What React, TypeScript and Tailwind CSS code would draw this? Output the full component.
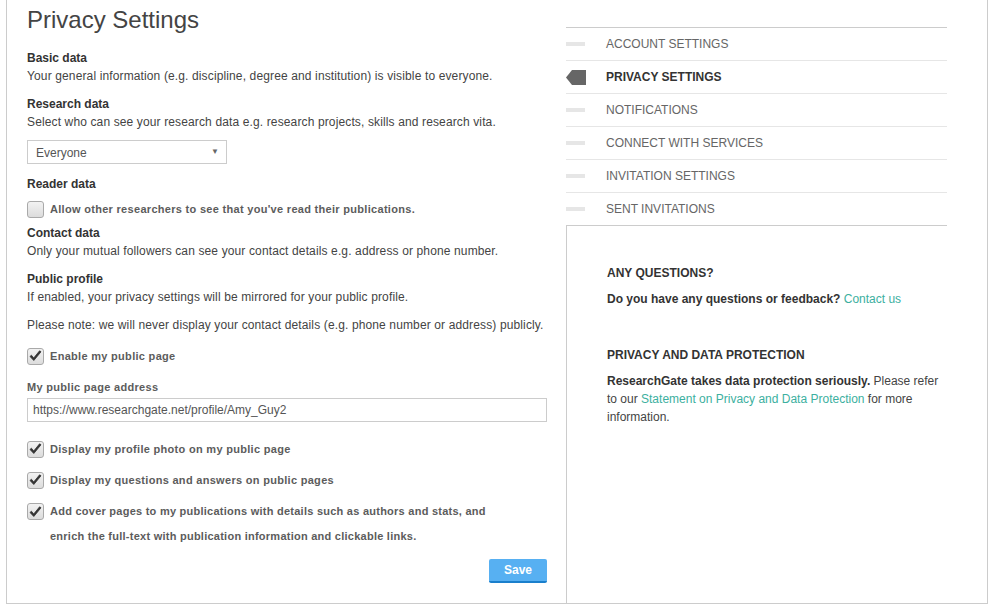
import React from "react";

function Check({ checked }: { checked: boolean }) {
  return (
    <div className="w-[17px] h-[17px] shrink-0 rounded-[3px] border border-[#a9a9a9] bg-gradient-to-b from-[#f2f2f2] to-[#dcdcdc] flex items-center justify-center">
      {checked && (
        <svg width="13" height="12" viewBox="0 0 13 12">
          <path d="M1 6.5 L4.8 10.5 L12 1.8 L10.6 0.8 L4.7 8 L2.4 5.2 Z" fill="#333" stroke="#333" strokeWidth="0.8" strokeLinejoin="round" />
        </svg>
      )}
    </div>
  );
}

function CheckRow({ checked, children, className = "" }: { checked: boolean; children: React.ReactNode; className?: string }) {
  return (
    <div className={"flex items-center gap-[6px] h-[18px] " + className}>
      <Check checked={checked} />
      <span className="text-[11px] font-bold text-[#5c5c5c] tracking-[0.3px]">{children}</span>
    </div>
  );
}

const navItems = [
  "ACCOUNT SETTINGS",
  "PRIVACY SETTINGS",
  "NOTIFICATIONS",
  "CONNECT WITH SERVICES",
  "INVITATION SETTINGS",
  "SENT INVITATIONS",
];

export default function App() {
  return (
    <div className="w-[993px] h-[605px] bg-white" style={{ fontFamily: '"Liberation Sans", Arial, sans-serif' }}>
      <div className="ml-[6px] w-[982px] h-[604px] border-l border-r border-b border-[#cccccc] flex">
        {/* Left column */}
        <div className="w-[540px] pl-[20px] flex flex-col">
          <h1 className="h-[40px] leading-[40px] text-[24px] text-[#444] font-normal">Privacy Settings</h1>

          <div className="mt-[9px] leading-[18px] text-[12px] font-bold text-[#333]">Basic data</div>
          <div className="leading-[18px] text-[12px] text-[#444] tracking-[0.13px]">Your general information (e.g. discipline, degree and institution) is visible to everyone.</div>

          <div className="mt-[10px] leading-[18px] text-[12px] font-bold text-[#333]">Research data</div>
          <div className="leading-[18px] text-[12px] text-[#444] tracking-[0.13px]">Select who can see your research data e.g. research projects, skills and research vita.</div>

          <div className="mt-[9px] w-[200px] h-[24px] border border-[#cccccc] flex items-center justify-between pl-[8px] pr-[7px]">
            <span className="text-[12px] text-[#555] pt-[1px]">Everyone</span>
            <span className="text-[8px] text-[#666]">▼</span>
          </div>

          <div className="mt-[11px] leading-[18px] text-[12px] font-bold text-[#333]">Reader data</div>
          <CheckRow checked={false} className="mt-[7px]">Allow other researchers to see that you've read their publications.</CheckRow>

          <div className="mt-[6px] leading-[18px] text-[12px] font-bold text-[#333]">Contact data</div>
          <div className="leading-[18px] text-[12px] text-[#444] tracking-[0.13px]">Only your mutual followers can see your contact details e.g. address or phone number.</div>

          <div className="mt-[10px] leading-[18px] text-[12px] font-bold text-[#333]">Public profile</div>
          <div className="leading-[18px] text-[12px] text-[#444] tracking-[0.13px]">If enabled, your privacy settings will be mirrored for your public profile.</div>
          <div className="mt-[10px] leading-[18px] text-[12px] text-[#444] tracking-[0.13px]">Please note: we will never display your contact details (e.g. phone number or address) publicly.</div>

          <CheckRow checked={true} className="mt-[13px]">Enable my public page</CheckRow>

          <div className="mt-[13px] leading-[18px] text-[11px] font-bold text-[#5c5c5c] tracking-[0.3px]">My public page address</div>
          <div className="mt-[2px] w-[520px] h-[24px] border border-[#cccccc] flex items-center pl-[5px]">
            <span className="text-[12px] text-[#555]">https://www.researchgate.net/profile/Amy_Guy2</span>
          </div>

          <CheckRow checked={true} className="mt-[18px]">Display my profile photo on my public page</CheckRow>
          <CheckRow checked={true} className="mt-[13px]">Display my questions and answers on public pages</CheckRow>

          <div className="mt-[10px] flex items-start gap-[6px]">
            <div className="mt-[4px]">
              <Check checked={true} />
            </div>
            <span className="text-[11px] leading-[25px] font-bold text-[#5c5c5c] tracking-[0.25px] w-[450px]">
              Add cover pages to my publications with details such as authors and stats, and enrich the full-text with publication information and clickable links.
            </span>
          </div>

          <div className="mt-[10px] w-[520px] flex justify-end">
            <button className="w-[58px] h-[24px] bg-[#57b0f2] border-b-2 border-[#1a7fcc] rounded-[2px] text-white text-[12px] font-bold">
              Save
            </button>
          </div>
        </div>

        {/* Right column */}
        <div className="ml-[19px] w-[381px] flex flex-col">
          <div className="mt-[27px] border-t border-[#cccccc]">
            {navItems.map((item, i) => {
              const active = i === 1;
              const last = i === navItems.length - 1;
              return (
                <div
                  key={item}
                  className={"flex items-center " + (last ? "h-[32px]" : "h-[33px] border-b border-[#e6e6e6]")}
                >
                  <div className="w-[40px] flex items-center">
                    {active ? (
                      <svg width="20" height="15" viewBox="0 0 20 15">
                        <polygon points="0,7.5 6,0 20,0 20,15 6,15" fill="#666" />
                      </svg>
                    ) : (
                      <div className="w-[19px] h-[4px] bg-[#e6e6e6]" />
                    )}
                  </div>
                  <span className={"text-[12px] " + (active ? "font-bold text-[#333]" : "text-[#666]")}>{item}</span>
                </div>
              );
            })}
          </div>
          <div className="flex-1 border-l border-t border-[#cccccc] pl-[40px] pt-[38px]">
            <div className="leading-[18px] text-[12px] font-bold text-[#333]">ANY QUESTIONS?</div>
            <div className="mt-[8px] leading-[18px] text-[12px] text-[#333]">
              <span className="font-bold">Do you have any questions or feedback?</span>{" "}
              <span className="text-[#3cb0a0]">Contact us</span>
            </div>
            <div className="mt-[38px] leading-[18px] text-[12px] font-bold text-[#333]">PRIVACY AND DATA PROTECTION</div>
            <div className="mt-[8px] w-[336px] leading-[18px] text-[12px] text-[#444]">
              <span className="font-bold text-[#333]">ResearchGate takes data protection seriously.</span> Please refer to our{" "}
              <span className="text-[#3cb0a0]">Statement on Privacy and Data Protection</span> for more information.
            </div>
          </div>
        </div>
      </div>
    </div>
  );
}
